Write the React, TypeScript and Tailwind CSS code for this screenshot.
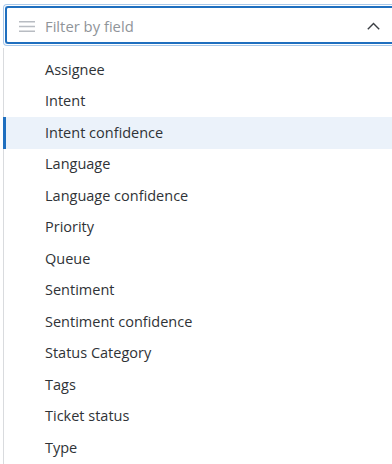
const FIELDS = [
  "Assignee",
  "Intent",
  "Intent confidence",
  "Language",
  "Language confidence",
  "Priority",
  "Queue",
  "Sentiment",
  "Sentiment confidence",
  "Status Category",
  "Tags",
  "Ticket status",
  "Type",
];

export default function App() {
  const active = "Intent confidence";

  return (
    <div
      className="w-[392px] h-[464px] overflow-hidden bg-white"
      style={{ fontFamily: '"Open Sans", "Noto Sans", sans-serif' }}
    >
      <div className="pt-[4px] pl-[3px]">
        {/* Filter input - runs past the right edge */}
        <div className="rounded-l-[4px] border border-r-0 border-[#a9c9ea] py-px pl-px">
          <div className="h-[38px] flex items-center rounded-l-[3px] border-2 border-r-0 border-[#1f6fbf] pl-[12px] pr-[12px]">
            <svg width="16" height="11" viewBox="0 0 16 11" className="shrink-0 mt-[3px]">
              <path d="M0 .75h16M0 5.5h16M0 10.25h16" stroke="#b8bcc2" strokeWidth="1.3" />
            </svg>
            <span className="ml-[10px] pt-[3px] text-[14.8px] text-[#8f9499]">Filter by field</span>
            <svg width="13" height="8" viewBox="0 0 13 8" className="ml-auto mt-[2px]">
              <path d="M.8 7.2 6.5 1.5l5.7 5.7" fill="none" stroke="#3b3f44" strokeWidth="1.4" />
            </svg>
          </div>
        </div>

        {/* Options list */}
        <div className="mt-[2px] border-l border-[#d9dbde] pt-[6px]">
          {FIELDS.map((f) => (
            <div
              key={f}
              className={
                f === active
                  ? "h-[31.5px] flex items-center bg-[#ebf2fa] border-l-[3px] border-[#1f6fbf] -ml-px pl-[39px] text-[14.5px] text-[#2f3337]"
                  : "h-[31.5px] flex items-center pl-[41px] text-[14.5px] text-[#2f3337]"
              }
            >
              {f}
            </div>
          ))}
        </div>
      </div>
    </div>
  );
}
